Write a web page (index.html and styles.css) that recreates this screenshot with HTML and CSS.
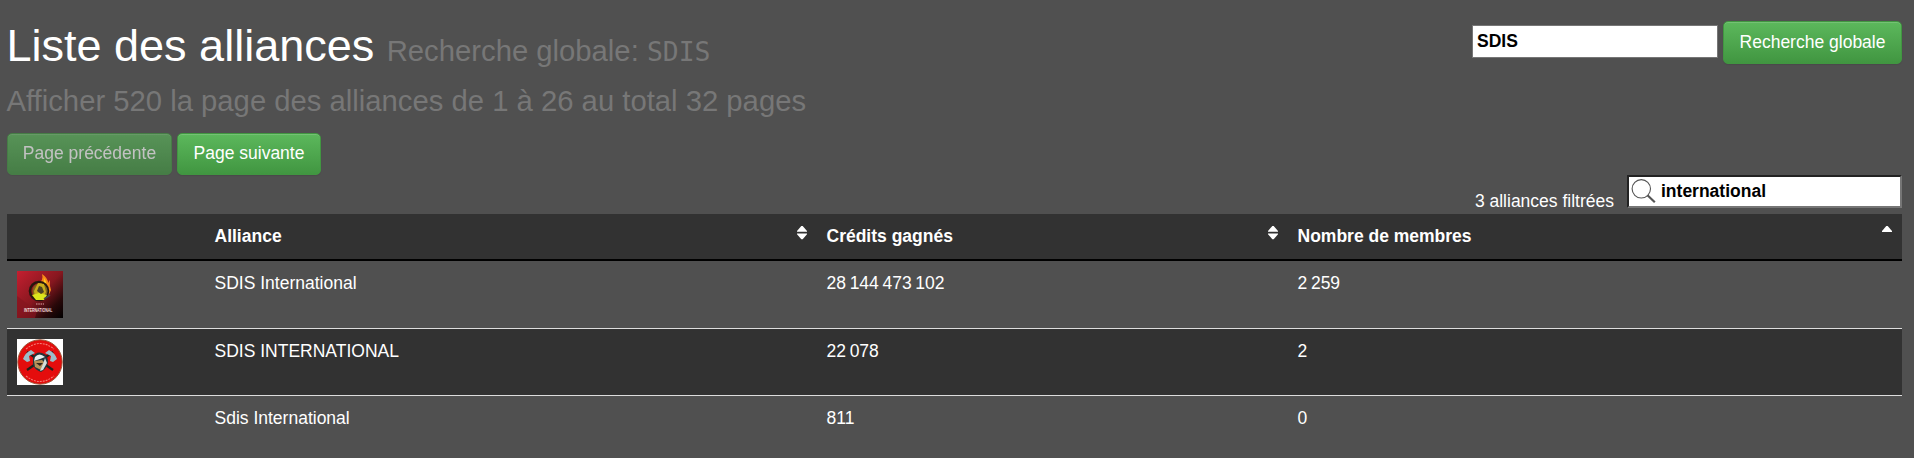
FILE: index.html
```html
<!DOCTYPE html>
<html lang="fr">
<head>
<meta charset="utf-8">
<title>Liste des alliances</title>
<link rel="stylesheet" href="styles.css">
</head>
<body>
<main class="page">
  <header class="page-header">
    <h1 class="title">Liste des alliances <small>Recherche globale: <span class="term">SDIS</span></small></h1>
    <form class="search"><input class="search-input" type="text" value="SDIS"><button class="btn" type="button">Recherche globale</button></form>
  </header>
  <h3 class="summary">Afficher 520 la page des alliances de 1 à 26 au total 32 pages</h3>
  <nav class="pager"><a class="btn btn-prev disabled">Page précédente</a><a class="btn btn-next">Page suivante</a></nav>
  <div class="filter">
    <span class="filter-count">3 alliances filtrées</span>
    <label class="filter-box">
      <svg class="lens" width="26" height="26" viewBox="0 0 26 26" fill="none" stroke="#555"><circle cx="11.3" cy="10.8" r="9.2" stroke-width="1.1"/><path d="M17.5 17.3l7.3 7" stroke-width="2.2"/></svg>
      <input class="filter-input" type="text" value="international">
    </label>
  </div>
  <table class="alliances">
    <colgroup><col class="c-logo"><col class="c-name"><col class="c-credits"><col class="c-members"></colgroup>
    <thead><tr>
      <th></th>
      <th><div class="head">Alliance<svg class="sort" width="10" height="14" viewBox="0 0 10 14"><path d="M0 5.8V5L4.3 0h1.4L10 5v.8zM0 7.4h10v.8l-4.3 5H4.3L0 8.2z" fill="#fff"/></svg></div></th>
      <th><div class="head">Crédits gagnés<svg class="sort" width="10" height="14" viewBox="0 0 10 14"><path d="M0 5.8V5L4.3 0h1.4L10 5v.8zM0 7.4h10v.8l-4.3 5H4.3L0 8.2z" fill="#fff"/></svg></div></th>
      <th><div class="head">Nombre de membres<svg class="sort" width="10" height="14" viewBox="0 0 10 14"><path d="M0 5l4.3-5h1.4L10 5v1H0z" fill="#fff"/></svg></div></th>
    </tr></thead>
    <tbody>
      <tr class="row-first">
        <td><svg class="logo" width="46" height="47" viewBox="0 0 46 47">
          <defs>
            <linearGradient id="red" x1="0" y1="0" x2="1" y2="1"><stop offset="0" stop-color="#c51f30"/><stop offset=".5" stop-color="#86171f"/><stop offset=".78" stop-color="#280809"/><stop offset="1" stop-color="#000"/></linearGradient>
            <filter id="soft"><feGaussianBlur stdDeviation=".5"/></filter>
          </defs>
          <path d="M0 0h46v47H0z" fill="url(#red)"/><path d="M0 47V25l20 15-2 7z" fill="#85151f" opacity=".7"/>
          <g filter="url(#soft)">
            <path d="M21 13q6-4 4-10 6 4 6 9l2-3q-1 5 1 10-3 8-8 9z" fill="#f78b16"/>
            <path d="M25 14q3-3 2-7 3 4 2 8l2 3-4 8z" fill="#ffd229"/>
            <circle cx="22" cy="20" r="9" fill="none" stroke="#28170d" stroke-width="2.6"/>
            <circle cx="23" cy="20" r="7.6" fill="#80671b"/>
            <path d="M17 20l4-8 6 1 2 8-3 6h-8z" fill="#c8ad1b"/><path d="M15 24l7-2 8 2-3 5h-8z" fill="#dbe51f"/>
            <path d="M20 20l2-5 3 1 2 5-3 2z" fill="#4d4222"/><path d="M27 28l6-4" stroke="#494448" stroke-width="1.6"/>
            <path d="M19 33h8" stroke="#b87477" stroke-width="1.4" stroke-dasharray="1.5 .8"/>
          </g>
          <text transform="translate(7 41.2) scale(.88 1.55)" class="logo-word">INTERNATIONAL</text>
        </svg></td>
        <td>SDIS International</td><td class="num">28 144 473 102</td><td class="num">2 259</td>
      </tr>
      <tr class="row-second">
        <td><svg class="logo" width="46" height="46" viewBox="0 0 46 46">
          <path d="M0 0h46v46H0z" fill="#fff"/>
          <g filter="url(#soft)">
            <circle cx="23" cy="23" r="22.2" fill="#e40c0b" stroke="#9d5a3c" stroke-width="1"/>
            <path d="M9 10q14-11 28 0M9 37q14 11 28 0" fill="none" stroke="#f47c77" stroke-width="1.1" stroke-dasharray="2 1"/>
            <path d="M10 13l26 18M36 13L10 31" stroke="#24201e" stroke-width="2.2"/>
            <path d="M6 20q2-6 8-9l4 3-6 3 1 5-3 1zM40 20q-2-6-8-9l-4 3 6 3-1 5 3 1z" fill="#9cbcc8"/>
            <path d="M16 18q3-6 9-4 6 2 6 9-1 7-7 10-6-2-8-7z" fill="#24343a"/>
            <path d="M18 18q4-5 10 0l-5 2-6 2z" fill="#e7f1ef"/><path d="M17 22l8-1 3 3-4 7-6-3z" fill="#b69159"/>
            <path d="M28 19l2 5-4 7-3 1 3-7z" fill="#d3dfdc"/><path d="M19 24h7l-3 3z" fill="#30251d"/>
          </g>
        </svg></td>
        <td>SDIS INTERNATIONAL</td><td class="num">22 078</td><td class="num">2</td>
      </tr>
      <tr class="row-third"><td></td><td>Sdis International</td><td class="num">811</td><td class="num">0</td></tr>
    </tbody>
  </table>
</main>
</body>
</html>
```
FILE: styles.css
```css
* { box-sizing: border-box; }
body {
  margin: 0;
  height: 458px;
  overflow: hidden;
  background: #505050;
  color: #fff;
  font: 17.5px/25px "Liberation Sans", Arial, sans-serif;
}
.page { padding: 21px 12px 0 7px; }
.page-header { display: flex; justify-content: space-between; align-items: flex-start; height: 61px; }
.title { margin: 0 0 0 -.5px; font-size: 45px; font-weight: 400; line-height: 50px; white-space: nowrap; }
.title small { font-size: 29.25px; color: #777; }
.term { font-family: "DejaVu Sans Mono", monospace; font-size: 26.4px; }
.search { display: flex; gap: 5px; }
.search-input {
  width: 246px; height: 33px; margin-top: 4px; padding: 0 4px 1px;
  border: 1px solid #767676; background: #fff; color: #000;
  font: bold 17.5px "Liberation Sans", Arial, sans-serif;
}
.btn {
  display: block; height: 43px; padding: 8px 15px;
  border: 1px solid #419641; border-radius: 5px;
  background: linear-gradient(#5cb85c, #419641);
  box-shadow: inset 0 1px 0 rgba(255,255,255,.15), 0 1px 1px rgba(0,0,0,.075);
  color: #fff; font: 17.5px/25px "Liberation Sans", Arial, sans-serif;
  text-align: center; white-space: nowrap;
}
.search .btn { width: 179px; padding: 8px 0; }
.summary { margin: 0 0 0 -.5px; height: 51px; color: #777; font-size: 29.25px; line-height: 38px; font-weight: 400; white-space: nowrap; }
.pager { display: flex; gap: 5px; }
.pager .btn { height: 42px; padding: 7px 0; }
.btn-prev { width: 165px; }
.btn-next { width: 144px; }
.disabled { opacity: .65; }
.filter { display: flex; justify-content: flex-end; height: 39px; }
.filter-count { margin: 14px 13px 0 0; }
.filter-box {
  display: flex; width: 275px; height: 33px;
  border: 2px solid; border-color: #222 #767676 #767676 #222; background: #fff;
}
.lens { flex: none; margin: 1px 0 0 1px; }
.filter-input {
  width: 230px; height: 28px; margin-left: 5px; padding: 0; border: 0;
  background: none; color: #000; font: bold 17.5px "Liberation Sans", Arial, sans-serif;
}
.alliances { width: 1895px; table-layout: fixed; border-collapse: separate; border-spacing: 0; }
.c-logo { width: 198px; }
.c-name { width: 612px; }
.c-credits { width: 471px; }
.c-members { width: 614px; }
th, td { padding: 10px 10px 0; text-align: left; vertical-align: top; }
td + td, th + th { padding-left: 9.5px; }
th { height: 47px; background: #323232; border-bottom: 2px solid #000; }
.head { display: flex; justify-content: space-between; }
.sort { margin: 2px .5px 0 0; }
.row-first td { height: 68px; border-bottom: 1px solid #ddd; }
.row-second td { height: 67px; background: #323232; border-bottom: 1px solid #ddd; }
.row-third td { height: 62px; }
.logo { display: block; }
.logo-word { font: bold 4px "Liberation Sans", Arial, sans-serif; fill: #f3dede; }
.num { word-spacing: -1.2px; }
```
